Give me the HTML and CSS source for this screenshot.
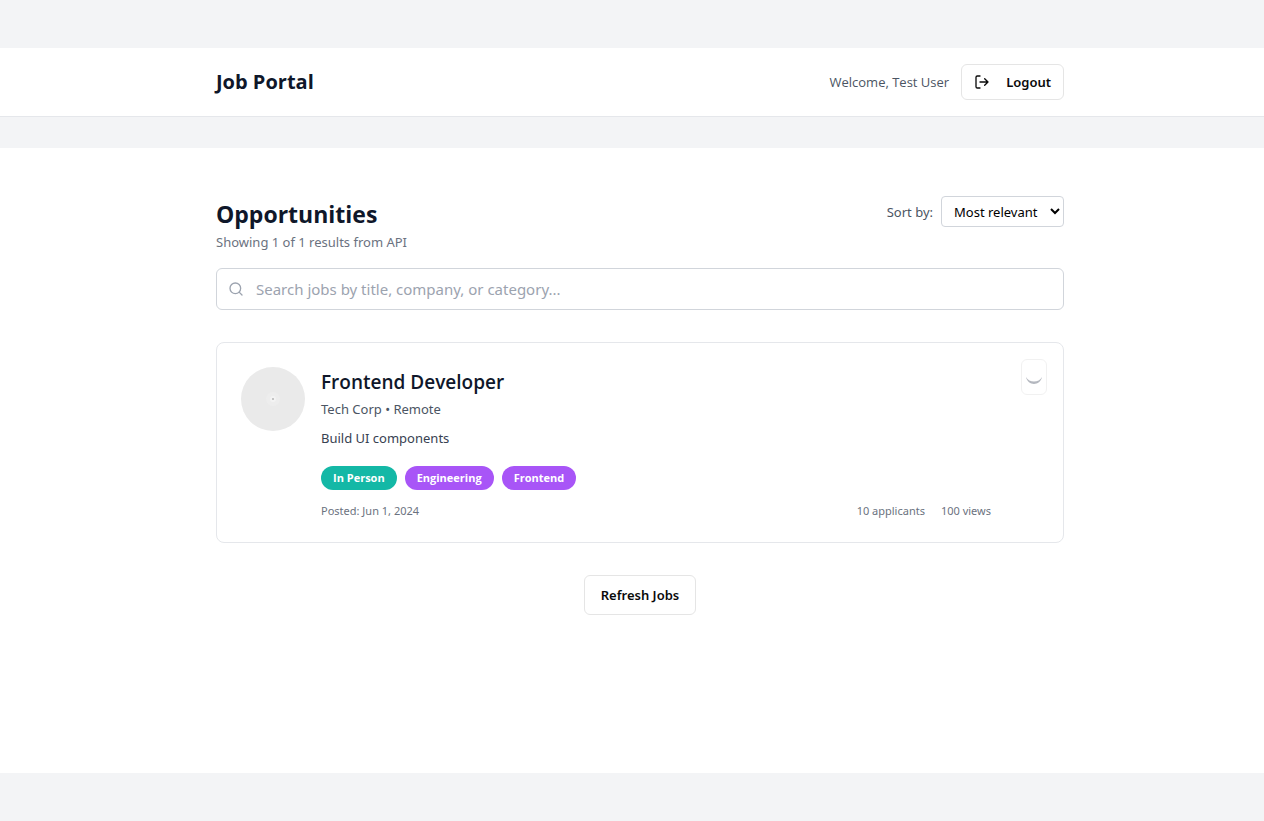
FILE: index.html
```html
<!DOCTYPE html>
<html lang="en">
<head>
<meta charset="utf-8">
<meta name="viewport" content="width=device-width, initial-scale=1">
<title>Job Portal</title>
<link rel="stylesheet" href="styles.css">
</head>
<body class="page">
<header class="topbar">
  <div class="container">
    <div class="topbar-row">
      <h1 class="brand">Job Portal</h1>
      <div class="account">
        <span class="welcome">Welcome, Test User</span>
        <button class="button logout" type="button">
          <svg class="icon" viewBox="0 0 24 24" aria-hidden="true"><path d="M9 21H5a2 2 0 0 1-2-2V5a2 2 0 0 1 2-2h4M16 17l5-5-5-5M21 12H9"/></svg>
          Logout
        </button>
      </div>
    </div>
  </div>
</header>
<main class="main">
  <div class="container">
    <div class="heading">
      <div>
        <h2 class="title">Opportunities</h2>
        <p class="summary">Showing 1 of 1 results from API</p>
      </div>
      <div class="sort">
        <label for="sort">Sort by:</label>
        <select id="sort" class="select"><option>Most relevant</option><option>Newest</option></select>
      </div>
    </div>
    <div class="search">
      <svg class="icon search-icon" viewBox="0 0 24 24" aria-hidden="true"><circle cx="11" cy="11" r="8"/><path d="m21 21-4.300-4.300"/></svg>
      <input class="search-input" type="text" aria-label="Search jobs" placeholder="Search jobs by title, company, or category...">
    </div>
    <article class="card">
      <svg class="logo" viewBox="0 0 64 64" aria-hidden="true">
        <circle cx="32" cy="32" r="32" fill="#eaeaea"/>
        <circle cx="32" cy="32" r="7" fill="#ededed"/>
        <circle cx="32" cy="32" r="3" fill="#f3f3f3"/>
        <path d="M31 31h2v2h-2z" fill="#c4c4c4"/>
      </svg>
      <div class="details">
        <h3 class="job-title">Frontend Developer</h3>
        <p class="company">Tech Corp • Remote</p>
        <p class="description">Build UI components</p>
        <div class="tags">
          <span class="tag tag-teal">In Person</span>
          <span class="tag">Engineering</span>
          <span class="tag">Frontend</span>
        </div>
        <div class="meta">
          <span>Posted: Jun 1, 2024</span>
          <div class="stats"><span>10 applicants</span><span>100 views</span></div>
        </div>
      </div>
      <button class="button bookmark" type="button" aria-label="Saving bookmark" disabled>
        <svg class="spinner" viewBox="0 0 16 16" aria-hidden="true"><path d="M0 8C2 17.300 14 17.300 16 8C13 14 3 14 0 8Z"/></svg>
      </button>
    </article>
    <div class="actions"><button class="button refresh" type="button">Refresh Jobs</button></div>
  </div>
</main>
</body>
</html>
```
FILE: styles.css
```css
* { box-sizing: border-box; }
h1, h2, h3, p { margin: 0; }
button, input, select { font: inherit; }

.page {
  display: flex;
  flex-direction: column;
  gap: 31px;
  min-height: 100vh;
  margin: 0;
  padding: 48px 0;
  background: #f3f4f6;
  color: #0f172a;
  font: 13px/20px "Noto Sans", "Open Sans", sans-serif;
}
.container { max-width: 912px; margin: 0 auto; padding: 0 24px 0 40px; }
.topbar { background: #fff; border-bottom: 1px solid #e5e7eb; }
.topbar-row { display: flex; align-items: center; justify-content: space-between; padding: 16px 0; }
.brand, .title, .job-title, .tag { font-family: "Open Sans", "Noto Sans", sans-serif; }
.brand { font-size: 20px; line-height: 28px; font-weight: 700; }
.account { display: flex; align-items: center; gap: 12px; color: #4b5563; }
.welcome { font-family: "Open Sans", "Noto Sans", sans-serif; }
.button {
  border: 1px solid #e5e5e5;
  border-radius: 6px;
  background: #fff;
  color: #0a0a0a;
  font-weight: 600;
}
.icon { width: 16px; height: 16px; fill: none; stroke: currentColor; stroke-width: 2; stroke-linecap: round; stroke-linejoin: round; }
.logout { display: flex; align-items: center; gap: 16px; height: 36px; padding: 0 12px; }

.main { flex: 1; padding: 48px 0; background: #fff; }
.heading { display: flex; justify-content: space-between; align-items: flex-start; margin-bottom: 16px; }
.title { font-size: 23px; line-height: 36px; font-weight: 700; }
.summary { color: #6b7280; }
.sort { display: flex; align-items: center; gap: 8px; color: #4b5563; }
.select { height: 31px; padding: 4px 0 4px 8px; border: 1px solid #d1d5db; border-radius: 4px; background: #fff; color: #000; width: 123px; }
.search { display: flex; align-items: center; gap: 12px; height: 42px; padding: 0 12px 0 11px; border: 1px solid #d1d5db; border-radius: 6px; }
.search-icon { color: #9ca3af; flex: none; }
.search-input { flex: 1; min-width: 0; padding: 0; border: 0; outline: 0; background: none; font-size: 15px; line-height: 24px; }
.search-input::placeholder { color: #9ca3af; }

.card { position: relative; display: flex; gap: 16px; margin-top: 32px; padding: 24px 72px 22px 24px; border: 1px solid #e5e7eb; border-radius: 8px; }
.logo { width: 64px; height: 64px; flex: none; }
.details { flex: 1; min-width: 0; }
.job-title { font-size: 19px; line-height: 30px; font-weight: 600; }
.company { margin-top: 2px; color: #4b5563; }
.description { margin-top: 9px; color: #374151; }
.tags { display: flex; gap: 8px; margin-top: 18px; }
.tag { padding: 4px 12px; border-radius: 12px; background: #a855f7; color: #fff; font-size: 11px; line-height: 16px; font-weight: 700; }
.tag-teal { background: #14b8a6; }
.meta { display: flex; justify-content: space-between; margin-top: 12px; color: #6b7280; font-size: 11px; line-height: 18px; }
.stats { display: flex; gap: 16px; }
.bookmark { position: absolute; top: 16px; right: 16px; width: 26px; height: 36px; padding: 0 4px; opacity: .5; }
.spinner { display: block; width: 16px; height: 16px; margin: auto; fill: #6b7280; }
.actions { display: flex; justify-content: center; margin-top: 32px; }
.refresh { height: 40px; padding: 0 16px; }
```
